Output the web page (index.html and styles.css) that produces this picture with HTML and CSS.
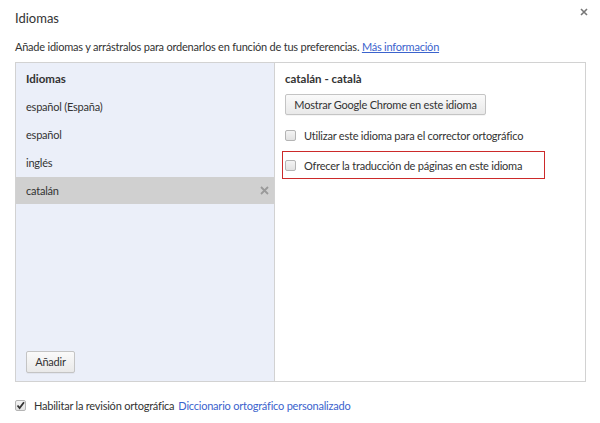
FILE: index.html
```html
<!DOCTYPE html>
<html lang="es">
<head>
<meta charset="utf-8">
<link rel="stylesheet" href="styles.css">
</head>
<body>
<div class="dialog">
  <div class="header">
    <div class="title">Idiomas</div>
    <svg class="close" width="8" height="8" viewBox="0 0 8 8"><path d="M1 1L7 7M7 1L1 7" stroke="#777" stroke-width="1.6"/></svg>
  </div>
  <div class="desc">Añade idiomas y arrástralos para ordenarlos en función de tus preferencias. <a class="link" href="#">Más información</a></div>
  <div class="box">
    <div class="left">
      <div class="list">
        <div class="item head">Idiomas</div>
        <div class="item">español (España)</div>
        <div class="item">español</div>
        <div class="item">inglés</div>
        <div class="item selected"><span>catalán</span>
          <svg class="remove" width="9" height="9" viewBox="0 0 9 9"><path d="M1 1L8 8M8 1L1 8" stroke="#9a9a9a" stroke-width="1.8"/></svg>
        </div>
      </div>
      <div class="left-footer"><button class="btn add">Añadir</button></div>
    </div>
    <div class="right">
      <div class="lang-title">catalán - català</div>
      <button class="btn show">Mostrar Google Chrome en este idioma</button>
      <div class="options">
        <label class="opt"><span class="cb"></span>Utilizar este idioma para el corrector ortográfico</label>
        <label class="opt marked"><span class="cb"></span>Ofrecer la traducción de páginas en este idioma</label>
      </div>
    </div>
  </div>
  <div class="footer">
    <span class="cb checked"><svg width="9" height="9" viewBox="0 0 9 9"><path d="M1.5 4.5L3.6 7L8 1.2" fill="none" stroke="#333" stroke-width="1.8"/></svg></span>
    <span class="ftext">Habilitar la revisión ortográfica</span>
    <a class="link" href="#">Diccionario ortográfico personalizado</a>
  </div>
</div>
</body>
</html>
```
FILE: styles.css
```css
html, body {
  margin: 0;
  padding: 0;
  background: #fff;
}
body {
  font-family: "Lato", "Noto Sans", sans-serif;
  font-size: 11px;
  letter-spacing: -0.22px;
  color: #333;
  width: 600px;
  height: 423px;
  overflow: hidden;
  white-space: nowrap;
}
.dialog {
  padding: 0 14px 0 15px;
}
.header {
  display: flex;
  justify-content: space-between;
  align-items: flex-start;
  height: 38px;
}
.title {
  font-size: 13px;
  letter-spacing: 0;
  margin-top: 9px;
  line-height: 18px;
  color: #333;
}
.close {
  margin-top: 8px;
  margin-right: -2px;
}
.desc {
  line-height: 18px;
  height: 24px;
}
.link {
  color: #3b63cd;
  text-decoration: none;
}
.desc .link {
  text-decoration: underline;
}
.box {
  border: 1px solid #d2d2d2;
  height: 318px;
  display: grid;
  grid-template-columns: 259px 1fr;
}
.left {
  background: #ebeff9;
  border-right: 1px solid #d2d2d2;
  display: flex;
  flex-direction: column;
  justify-content: space-between;
}
.list {
  padding-top: 2px;
}
.item {
  height: 28px;
  line-height: 28px;
  padding-left: 10px;
  padding-right: 5px;
  display: flex;
  align-items: center;
  justify-content: space-between;
}
.item.head {
  font-weight: bold;
  font-size: 11.5px;
  letter-spacing: 0;
}
.item.selected {
  background: #d0d0d0;
  height: 27px;
}
.left-footer {
  padding: 0 0 8px 10px;
}
.btn {
  font-family: inherit;
  font-size: 11px;
  letter-spacing: -0.2px;
  color: #333;
  background: linear-gradient(#fafafa, #e9e9e9);
  border: 1px solid #c4c4c4;
  border-radius: 2px;
  height: 22px;
  padding: 0 8px;
  line-height: 18px;
  white-space: nowrap;
  text-align: center;
  box-shadow: 0 1px 0 rgba(0,0,0,0.04);
}
.add {
  width: 49px;
  padding: 0;
}
.right {
  padding-left: 10px;
  padding-top: 2px;
}
.lang-title {
  font-weight: bold;
  font-size: 11.5px;
  letter-spacing: 0;
  height: 28px;
  line-height: 28px;
}
.show {
  height: 21px;
  width: 201px;
  padding: 0;
  margin-top: 1px;
}
.options {
  margin-top: 6px;
  display: flex;
  flex-direction: column;
  gap: 2px;
  margin-left: -3px;
}
.opt {
  display: flex;
  align-items: center;
  height: 28px;
  width: 263px;
  box-sizing: border-box;
  border: 1px solid transparent;
  padding-left: 2px;
}
.opt.marked {
  border-color: #cc2a2a;
}
.cb {
  width: 11px;
  height: 11px;
  box-sizing: border-box;
  border: 1px solid #b4b4b4;
  border-radius: 2px;
  background: linear-gradient(#f4f4f4, #e2e2e2);
  margin-right: 8px;
  flex: none;
  display: inline-flex;
  align-items: center;
  justify-content: center;
}
.footer {
  display: flex;
  align-items: center;
  margin-top: 16px;
  height: 14px;
}
.footer .cb {
  margin-right: 8px;
}
.ftext {
  margin-right: 4px;
}
```
